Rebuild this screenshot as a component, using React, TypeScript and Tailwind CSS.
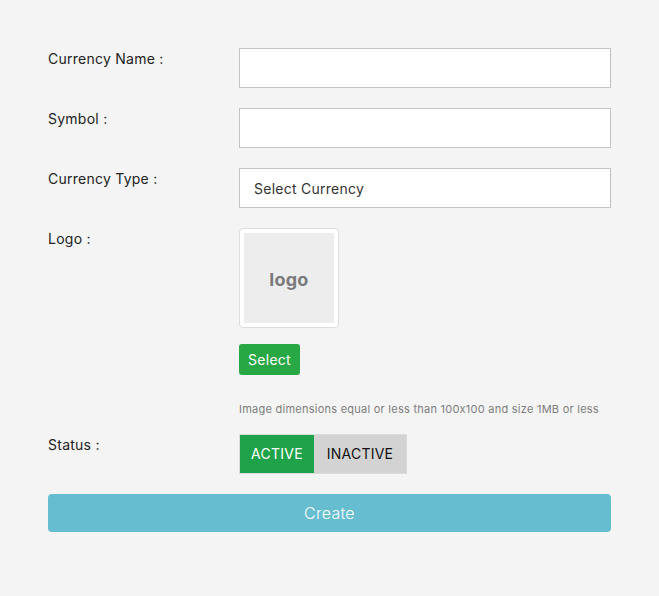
export default function App() {
  const label = "w-[191px] shrink-0 pt-0 text-[14px] text-[#222]";
  const inp = "h-[40px] w-[373px] border border-[#c4c4c4] bg-white px-[14px] text-[14px] text-[#333] outline-none";

  return (
    <div className="min-h-[596px] w-full bg-[#f4f4f4] font-['Inter',sans-serif] tracking-[0.25px] [font-feature-settings:'calt'_0]">
      <div className="px-[48px] pt-[48px]">
        <div className="flex">
          <label className={label}>Currency Name :</label>
          <input className={inp} />
        </div>

        <div className="mt-[20px] flex">
          <label className={label}>Symbol :</label>
          <input className={inp} />
        </div>

        <div className="mt-[20px] flex">
          <label className={label}>Currency Type :</label>
          <div className={`${inp} flex items-center`}>Select Currency</div>
        </div>

        <div className="mt-[20px] flex">
          <label className={label}>Logo :</label>
          <div className="flex flex-col items-start">
            <div className="h-[100px] w-[100px] rounded-[4px] border border-[#dcdde0] bg-white p-[4px]">
              <div className="flex h-full w-full items-center justify-center bg-[#ededed] pt-[3px] text-[18px] font-bold text-[#7a7a7a]">
                logo
              </div>
            </div>
            <button className="mt-[16px] h-[31px] w-[61px] rounded-[3px] bg-[#28a745] text-[14px] text-white">
              Select
            </button>
            <p className="mt-[26px] text-[11px] text-[#7d7d7d]">
              Image dimensions equal or less than 100x100 and size 1MB or less
            </p>
          </div>
        </div>

        <div className="mt-[16px] flex">
          <label className={label}>Status :</label>
          <div className="flex h-[40px] border border-[#dcdcdc] text-[14px]">
            <button className="w-[74px] bg-[#1fa34a] text-white">ACTIVE</button>
            <button className="w-[92px] bg-[#d3d3d3] text-[#111]">INACTIVE</button>
          </div>
        </div>

        <button className="mt-[20px] h-[38px] w-[563px] rounded-[4px] bg-[#65bdcf] text-[16px] font-light text-white">
          Create
        </button>
      </div>
    </div>
  );
}
